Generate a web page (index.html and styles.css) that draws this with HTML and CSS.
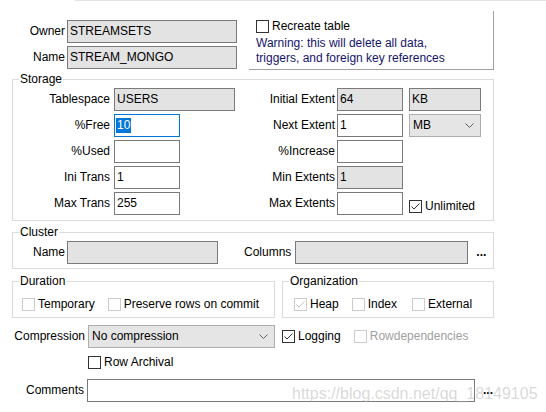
FILE: index.html
```html
<!DOCTYPE html>
<html>
<head>
<meta charset="utf-8">
<link rel="stylesheet" href="styles.css">
</head>
<body>
<div class="tabline"></div>
<div class="header">
  <div class="idgrid">
    <span class="lbl">Owner</span><div class="field ro">STREAMSETS</div>
    <span class="lbl">Name</span><div class="field ro">STREAM_MONGO</div>
  </div>
  <div class="recreate">
    <div class="chk"><span class="box"></span><span>Recreate table</span></div>
    <div class="warn">Warning: this will delete all data,<br>triggers, and foreign key references</div>
  </div>
</div>

<fieldset class="grp storage">
  <legend>Storage</legend>
  <div class="sgrid">
    <span class="lbl">Tablespace</span><div class="field ro w121">USERS</div>
    <span class="lbl r">Initial Extent</span><div class="field ro w66">64</div><div class="field ro w72">KB</div>

    <span class="lbl">%Free</span><div class="field focus w66"><span class="sel">10</span></div>
    <span class="lbl r">Next Extent</span><div class="field w66">1</div>
    <div class="combo w72"><span>MB</span><svg width="9" height="5" viewBox="0 0 9 5"><polyline points="0.5,0.5 4.5,4.5 8.5,0.5" fill="none" stroke="#606060"/></svg></div>

    <span class="lbl">%Used</span><div class="field w66"></div>
    <span class="lbl r">%Increase</span><div class="field w66"></div><span></span>

    <span class="lbl">Ini Trans</span><div class="field w66">1</div>
    <span class="lbl r">Min Extents</span><div class="field ro w66">1</div><span></span>

    <span class="lbl">Max Trans</span><div class="field w66">255</div>
    <span class="lbl r">Max Extents</span><div class="field w66"></div>
    <div class="chk unl"><span class="box"><svg width="11" height="11" viewBox="0 0 11 11"><polyline points="1.5,5.5 4,8 9.5,2.5" fill="none" stroke="#333"/></svg></span><span>Unlimited</span></div>
  </div>
</fieldset>

<fieldset class="grp cluster">
  <legend>Cluster</legend>
  <div class="crow">
    <span class="lbl lname">Name</span><div class="field ro w151"></div>
    <span class="lbl lcol">Columns</span><div class="field ro w173"></div>
    <span class="dots">...</span>
  </div>
</fieldset>

<div class="durorg">
  <fieldset class="grp dur">
    <legend>Duration</legend>
    <div class="crow2 durrow">
      <div class="chk"><span class="box dis"></span><span>Temporary</span></div>
      <div class="chk"><span class="box dis"></span><span>Preserve rows on commit</span></div>
    </div>
  </fieldset>
  <fieldset class="grp org">
    <legend>Organization</legend>
    <div class="crow2 orgrow">
      <div class="chk"><span class="box dis"><svg width="11" height="11" viewBox="0 0 11 11"><polyline points="1.5,5.5 4,8 9.5,2.5" fill="none" stroke="#c4c4c4"/></svg></span><span>Heap</span></div>
      <div class="chk"><span class="box dis"></span><span>Index</span></div>
      <div class="chk ext"><span class="box dis"></span><span>External</span></div>
    </div>
  </fieldset>
</div>

<div class="comprow">
  <span class="lbl lcomp">Compression</span>
  <div class="combo w187"><span>No compression</span><svg width="9" height="5" viewBox="0 0 9 5"><polyline points="0.5,0.5 4.5,4.5 8.5,0.5" fill="none" stroke="#606060"/></svg></div>
  <div class="chk logging"><span class="box"><svg width="11" height="11" viewBox="0 0 11 11"><polyline points="1.5,5.5 4,8 9.5,2.5" fill="none" stroke="#333"/></svg></span><span>Logging</span></div>
  <div class="chk rowdep"><span class="box dis"></span><span>Rowdependencies</span></div>
</div>

<div class="chk rarch"><span class="box"></span><span>Row Archival</span></div>

<div class="commrow">
  <span class="lbl lcomm">Comments</span>
  <div class="field w388"></div>
  <span class="dots">...</span>
</div>

<div class="watermark">https://blog.csdn.net/qq_18149105</div>
</body>
</html>
```

FILE: styles.css
```css
* { box-sizing: border-box; }

body {
  margin: 0;
  width: 546px;
  height: 412px;
  overflow: hidden;
  position: relative;
  background: #fff;
  color: #000;
  font-family: "Liberation Sans", Arial, sans-serif;
  font-size: 12px;
  line-height: 15px;
}

.tabline {
  height: 1px;
  margin-left: 75px;
  background: #e3e3e3;
}

.header {
  display: flex;
  align-items: flex-start;
  height: 69px;
}

.idgrid {
  display: grid;
  grid-template-columns: 65px 170px;
  grid-auto-rows: 23px;
  column-gap: 2px;
  row-gap: 3px;
  align-items: center;
  margin-top: 19px;
}

.lbl {
  text-align: right;
  white-space: nowrap;
}

.recreate {
  margin-left: 12px;
  margin-top: 10px;
  width: 245px;
  height: 59px;
  border-right: 1px solid #a0a0a0;
  border-bottom: 1px solid #a0a0a0;
  padding: 8px 0 0 7px;
}

.warn {
  margin-top: 2px;
  color: #14146e;
}

.field {
  height: 23px;
  border: 1px solid #7a7a7a;
  background: #fff;
  padding-left: 2px;
  line-height: 21px;
  white-space: nowrap;
  overflow: hidden;
}

.ro { background: #e3e3e3; }

.focus {
  border-color: #0078d7;
  padding-left: 1px;
}

.sel {
  display: inline-block;
  vertical-align: middle;
  line-height: 15px;
  padding: 0 1px;
  background: #0078d7;
  color: #fff;
}

.combo {
  display: flex;
  align-items: center;
  justify-content: space-between;
  height: 23px;
  border: 1px solid #adadad;
  background: #e5e5e5;
  padding: 0 6px 0 3px;
  white-space: nowrap;
}

.w121 { width: 121px; }
.w66 { width: 66px; }
.w72 { width: 72px; }
.w151 { width: 151px; }
.w173 { width: 173px; }
.w187 { width: 187px; }
.w388 { width: 388px; }

.grp {
  margin: 0;
  padding: 0;
  min-width: 0;
  border: 1px solid #dcdcdc;
}

.grp legend {
  margin-left: 6px;
  padding: 0 1px;
  line-height: 16px;
  font-size: 12px;
}

.storage {
  margin: 1px 0 0 12px;
  width: 482px;
  padding: 1px 0 5px 0;
}

.sgrid {
  display: grid;
  grid-template-columns: 101px 121px 102px 72px 72px;
  grid-auto-rows: 23px;
  row-gap: 3px;
  align-items: center;
}

.sgrid .lbl { padding-right: 4px; }
.sgrid .lbl.r { padding-right: 2px; }

.unl {
  align-self: end;
  margin-bottom: 1px;
}

.cluster {
  margin: 3px 0 0 12px;
  width: 482px;
  padding: 1px 0 4px 0;
}

.crow {
  display: flex;
  align-items: center;
  height: 23px;
}

.lname {
  width: 52px;
  margin-right: 2px;
}

.lcol {
  margin-left: 26px;
  margin-right: 4px;
}

.dots {
  margin-left: 8px;
  font-weight: bold;
}

.durorg {
  display: flex;
  gap: 7px;
  margin: 4px 0 0 12px;
}

.dur {
  width: 263px;
  padding: 8px 0 6px 0;
}

.org {
  width: 212px;
  padding: 8px 0 6px 0;
}

.crow2 {
  display: flex;
  align-items: center;
  gap: 13px;
  height: 14px;
}

.durrow { margin-left: 9px; }
.orgrow { margin-left: 11px; }

.chk {
  display: flex;
  align-items: center;
  gap: 3px;
  white-space: nowrap;
}

.box {
  display: flex;
  flex: none;
  width: 13px;
  height: 13px;
  border: 1px solid #333;
  background: #fff;
}

.box.dis { border-color: #cccccc; }

.ext { margin-left: 2px; }

.comprow {
  display: flex;
  align-items: center;
  height: 23px;
  margin-top: 7px;
}

.lcomp {
  width: 88px;
  padding-right: 3px;
}

.logging { margin-left: 7px; }

.rowdep {
  margin-left: 13px;
  color: #a0a0a0;
}

.rarch {
  margin: 8px 0 0 88px;
  height: 13px;
}

.commrow {
  display: flex;
  align-items: center;
  height: 23px;
  margin-top: 10px;
}

.lcomm {
  width: 87px;
  padding-right: 3px;
}

.watermark {
  position: absolute;
  left: 292px;
  top: 386px;
  font-size: 16px;
  line-height: 16px;
  color: rgba(170, 170, 170, 0.45);
  white-space: nowrap;
  pointer-events: none;
}
```
